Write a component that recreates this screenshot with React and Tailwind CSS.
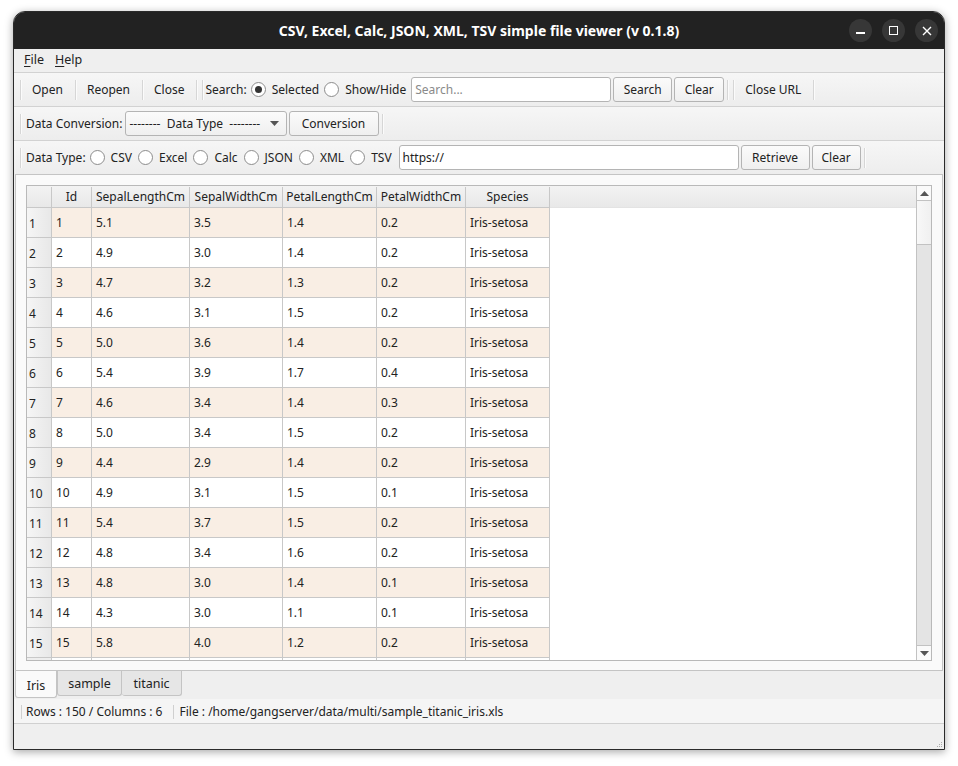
import React from "react";

const rows = [
  [1, "5.1", "3.5", "1.4", "0.2"],
  [2, "4.9", "3.0", "1.4", "0.2"],
  [3, "4.7", "3.2", "1.3", "0.2"],
  [4, "4.6", "3.1", "1.5", "0.2"],
  [5, "5.0", "3.6", "1.4", "0.2"],
  [6, "5.4", "3.9", "1.7", "0.4"],
  [7, "4.6", "3.4", "1.4", "0.3"],
  [8, "5.0", "3.4", "1.5", "0.2"],
  [9, "4.4", "2.9", "1.4", "0.2"],
  [10, "4.9", "3.1", "1.5", "0.1"],
  [11, "5.4", "3.7", "1.5", "0.2"],
  [12, "4.8", "3.4", "1.6", "0.2"],
  [13, "4.8", "3.0", "1.4", "0.1"],
  [14, "4.3", "3.0", "1.1", "0.1"],
  [15, "5.8", "4.0", "1.2", "0.2"],
];

function Sep() {
  return <div className="ml-[3px] mr-[1px] h-[20px] w-[2px] shrink-0 border-l border-[#d6d6d6] bg-[#fbfbfb]" />;
}

function Radio({ checked }) {
  return (
    <span className="inline-flex h-[15px] w-[15px] shrink-0 items-center justify-center rounded-full border border-[#8c8c8c] bg-white">
      {checked && <span className="h-[7px] w-[7px] rounded-full bg-[#333]" />}
    </span>
  );
}

function Btn({ children, w }) {
  return (
    <div
      className={`flex h-[25px] shrink-0 items-center justify-center whitespace-nowrap rounded-[3px] border border-[#b4b4b4] bg-gradient-to-b from-[#fbfbfb] to-[#efefef] text-[12px] text-[#222] ${w}`}
    >
      {children}
    </div>
  );
}

function ToolText({ children }) {
  return <span className="whitespace-nowrap px-[9px] text-[12px] text-[#222]">{children}</span>;
}

const colW = ["w-[25px]", "w-[40px]", "w-[98px]", "w-[93px]", "w-[94px]", "w-[89px]", "w-[84px]"];

export default function App() {
  return (
    <div
      className="h-[766px] w-[958px] bg-white pl-[13px] pt-[11px]"
      style={{ fontFamily: '"Noto Sans", "Open Sans", sans-serif' }}
    >
      <div className="flex h-[739px] w-[932px] flex-col overflow-hidden rounded-t-[12px] border border-[#2a2a2a] bg-[#efefef] shadow-[0_2px_8px_rgba(0,0,0,0.35)]">
        {/* Title bar */}
        <div className="relative flex h-[37px] shrink-0 items-center justify-center bg-[#222222]">
          <span className="text-[14px] font-bold text-white">
            CSV, Excel, Calc, JSON, XML, TSV simple file viewer (v 0.1.8)
          </span>
          <div className="absolute right-[6px] top-[7px] flex gap-[10px]">
            <div className="flex h-[23px] w-[23px] items-center justify-center rounded-full bg-[#373737]">
              <div className="mt-[5px] h-[1.5px] w-[9px] bg-white" />
            </div>
            <div className="flex h-[23px] w-[23px] items-center justify-center rounded-full bg-[#373737]">
              <div className="h-[9px] w-[9px] border-[1.5px] border-white" />
            </div>
            <div className="flex h-[23px] w-[23px] items-center justify-center rounded-full bg-[#373737]">
              <svg width="10" height="10" viewBox="0 0 10 10">
                <path d="M1 1L9 9M9 1L1 9" stroke="white" strokeWidth="1.4" />
              </svg>
            </div>
          </div>
        </div>

        {/* Menu bar */}
        <div className="flex h-[23px] shrink-0 items-center gap-[11px] pl-[10px] text-[12.5px] text-[#222]">
          <span>
            <span className="underline underline-offset-2">F</span>ile
          </span>
          <span>
            <span className="underline underline-offset-2">H</span>elp
          </span>
        </div>

        {/* Toolbar 1 */}
        <div className="flex h-[34px] shrink-0 items-center border-t border-[#d2d2d2] bg-gradient-to-b from-[#f6f6f6] to-[#ededed] pl-[3px]">
          <Sep />
          <ToolText>Open</ToolText>
          <Sep />
          <ToolText>Reopen</ToolText>
          <Sep />
          <ToolText>Close</ToolText>
          <Sep />
          <Sep />
          <span className="pl-[0px] pr-[4px] text-[12px] text-[#222]">Search:</span>
          <Radio checked />
          <span className="pl-[6px] pr-[5px] text-[12px] text-[#222]">Selected</span>
          <Radio />
          <span className="pl-[6px] pr-[5px] text-[12px] text-[#222]">Show/Hide</span>
          <div className="flex h-[25px] w-[200px] shrink-0 items-center rounded-[3px] border border-[#b4b4b4] bg-white pl-[3px] text-[12px] text-[#8a8a8a]">
            Search...
          </div>
          <div className="ml-[2px]">
            <Btn w="w-[59px]">Search</Btn>
          </div>
          <div className="ml-[2px]">
            <Btn w="w-[50px]">Clear</Btn>
          </div>
          <Sep />
          <Sep />
          <ToolText>Close URL</ToolText>
          <Sep />
        </div>

        {/* Toolbar 2 */}
        <div className="flex h-[34px] shrink-0 items-center border-t border-[#d2d2d2] bg-gradient-to-b from-[#f6f6f6] to-[#ededed] pl-[3px]">
          <Sep />
          <span className="pl-[3px] pr-[2px] text-[12px] text-[#222]">Data Conversion:</span>
          <div className="flex h-[25px] w-[162px] shrink-0 items-center justify-between whitespace-nowrap rounded-[3px] border border-[#b4b4b4] bg-gradient-to-b from-[#fbfbfb] to-[#efefef] pl-[4px] pr-[7px] text-[12px] text-[#222]">
            <span>-------- &nbsp;Data Type &nbsp;--------</span>
            <svg width="9" height="5" viewBox="0 0 9 5">
              <path d="M0 0H9L4.5 5Z" fill="#555" />
            </svg>
          </div>
          <div className="ml-[2px]">
            <Btn w="w-[90px]">Conversion</Btn>
          </div>
          <Sep />
        </div>

        {/* Toolbar 3 */}
        <div className="flex h-[34px] shrink-0 items-center border-t border-[#d2d2d2] bg-gradient-to-b from-[#f6f6f6] to-[#ededed] pl-[3px]">
          <Sep />
          <span className="pl-[3px] pr-[4px] text-[12px] text-[#222]">Data Type:</span>
          {["CSV", "Excel", "Calc", "JSON", "XML", "TSV"].map((t) => (
            <React.Fragment key={t}>
              <Radio />
              <span className="pl-[6px] pr-[6px] text-[12px] text-[#222]">{t}</span>
            </React.Fragment>
          ))}
          <div className="ml-[1px] flex h-[25px] w-[340px] shrink-0 items-center rounded-[3px] border border-[#b4b4b4] bg-white pl-[3px] text-[12px] text-[#222]">
            https://
          </div>
          <div className="ml-[2px]">
            <Btn w="w-[69px]">Retrieve</Btn>
          </div>
          <div className="ml-[2px]">
            <Btn w="w-[49px]">Clear</Btn>
          </div>
          <Sep />
        </div>

        {/* Table frame */}
        <div className="mx-[1px] flex h-[497px] shrink-0 flex-col border border-[#c4c4c4] bg-[#fafafa] px-[10px] pt-[10px]">
          <div className="flex h-[476px] border border-[#b9b9b9] bg-white">
            <div className="flex min-w-0 flex-1 flex-col overflow-hidden">
              {/* Header */}
              <div className="flex h-[22px] shrink-0 bg-gradient-to-b from-[#f3f3f3] to-[#e8e8e8] pt-[1px] text-[12px] text-[#222]">
                {["", "Id", "SepalLengthCm", "SepalWidthCm", "PetalLengthCm", "PetalWidthCm", "Species"].map(
                  (h, i) => (
                    <div
                      key={i}
                      className={`flex shrink-0 items-center justify-center border-b border-r border-[#c8c8c8] ${colW[i]}`}
                    >
                      {h}
                    </div>
                  )
                )}
                <div className="flex-1 border-b border-[#e3e3e3]" />
              </div>
              {rows.map((r, idx) => (
                <div key={idx} className="flex h-[30px] shrink-0 text-[12px] text-[#222]">
                  <div
                    className={`flex shrink-0 items-center border-b border-r border-[#c8c8c8] bg-gradient-to-r from-[#f5f5f5] to-[#e8e8e8] pl-[2px] pt-[2px] ${colW[0]}`}
                  >
                    {r[0]}
                  </div>
                  {[String(r[0]), r[1], r[2], r[3], r[4], "Iris-setosa"].map((c, j) => (
                    <div
                      key={j}
                      className={`flex shrink-0 items-center border-b border-r border-[#c8c8c8] pl-[4px] ${colW[j + 1]} ${
                        idx % 2 === 0 ? "bg-[#f9eee4]" : "bg-white"
                      }`}
                    >
                      {c}
                    </div>
                  ))}
                </div>
              ))}
              {/* Partially visible next row (no visible text) */}
              <div className="flex h-[30px] shrink-0">
                <div className={`shrink-0 border-r border-[#c8c8c8] bg-[#eeeeee] ${colW[0]}`} />
                {[1, 2, 3, 4, 5, 6].map((j) => (
                  <div key={j} className={`shrink-0 border-r border-[#c8c8c8] bg-white ${colW[j]}`} />
                ))}
              </div>
            </div>
            {/* Scrollbar */}
            <div className="flex w-[15px] shrink-0 flex-col border-l border-[#c2c2c2] bg-[#e4e4e4]">
              <div className="flex h-[15px] shrink-0 items-center justify-center border-b border-[#c2c2c2] bg-[#fafafa]">
                <svg width="9" height="5" viewBox="0 0 9 5">
                  <path d="M0 5H9L4.5 0Z" fill="#555" />
                </svg>
              </div>
              <div className="h-[44px] shrink-0 border-b border-[#c2c2c2] bg-gradient-to-r from-[#f8f8f8] to-[#f0f0f0]" />
              <div className="flex-1" />
              <div className="flex h-[15px] shrink-0 items-center justify-center border-t border-[#c2c2c2] bg-[#fafafa]">
                <svg width="9" height="5" viewBox="0 0 9 5">
                  <path d="M0 0H9L4.5 5Z" fill="#555" />
                </svg>
              </div>
            </div>
          </div>
        </div>

        {/* Tabs */}
        <div className="flex h-[28px] shrink-0 items-start pl-[1px]">
          <div className="flex h-[27px] w-[42px] items-center justify-center rounded-b-[3px] border border-t-0 border-[#c4c4c4] bg-[#fafafa] pt-[3px] text-[12.5px] leading-[16px] text-[#222]">
            Iris
          </div>
          <div className="flex h-[25px] w-[65px] items-center justify-center rounded-b-[3px] border border-t-0 border-[#c4c4c4] bg-[#e6e6e6] pt-[1px] text-[12.5px] leading-[16px] text-[#222]">
            sample
          </div>
          <div className="flex h-[25px] w-[60px] items-center justify-center rounded-b-[3px] border border-l-0 border-t-0 border-[#c4c4c4] bg-[#e6e6e6] pt-[1px] text-[12.5px] leading-[16px] text-[#222]">
            titanic
          </div>
        </div>

        {/* Status bar */}
        <div className="flex h-[25px] shrink-0 items-center border-b border-[#d0d0d0] bg-[#f5f5f5] pl-[7px] pt-[2px] text-[12px] text-[#222]">
          <span className="mr-[4px] h-[14px] w-[1px] bg-[#d0d0d0]" />
          <span>Rows : 150 / Columns : 6</span>
          <span className="ml-[11px] mr-[4px] h-[14px] w-[2px] border-l border-[#d0d0d0]" />
          <span>File : /home/gangserver/data/multi/sample_titanic_iris.xls</span>
        </div>

        {/* Bottom empty */}
        <div className="relative flex-1 bg-[#efefef]">
          <div className="absolute bottom-[2px] right-[2px] grid grid-cols-3 gap-[1px]">
            {[0, 1, 2, 3, 4, 5, 6, 7, 8].map((i) => (
              <span
                key={i}
                className={`h-[1px] w-[1px] ${[2, 4, 5, 6, 7, 8].includes(i) ? "bg-[#aaa]" : "bg-transparent"}`}
              />
            ))}
          </div>
        </div>
      </div>
    </div>
  );
}
